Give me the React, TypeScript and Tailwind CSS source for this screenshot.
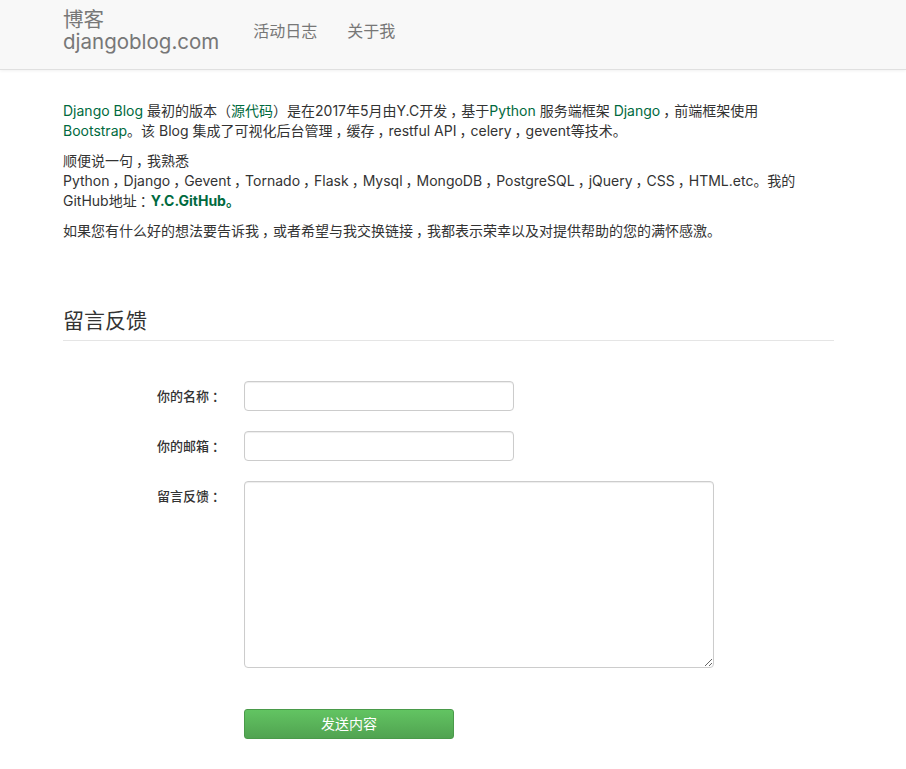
import React from 'react';

const font = { fontFamily: 'Inter, "Noto Sans CJK SC", sans-serif' };

const Green: React.FC<{ children: React.ReactNode; bold?: boolean }> = ({ children, bold }) => (
  <a href="#" className={`text-[#006a3e] ${bold ? 'font-bold' : ''}`}>{children}</a>
);

// full-width punctuation nudged to the middle of its box, as in the original rendering
const P: React.FC<{ c: string }> = ({ c }) => (
  <span className="ml-[3px] tracking-[-3px]">{c}</span>
);

const App: React.FC = () => {
  return (
    <div className="min-h-screen bg-white text-[#333] text-[14px] leading-[20px]" style={font}>
      <nav className="h-[70px] bg-[#f8f8f8] border-b border-[#e0e0e0] shadow-[0_1px_3px_rgba(0,0,0,0.06)] flex items-start pl-[63px]">
        <a href="#" className="block pt-[9px] text-[#777] text-[20.5px] leading-[22px]">
          <div>博客</div>
          <div>djangoblog.com</div>
        </a>
        <ul className="flex ml-[34px] pt-[21px] text-[#777] text-[16px] leading-[20px]">
          <li><a href="#">活动日志</a></li>
          <li className="ml-[30px]"><a href="#">关于我</a></li>
        </ul>
      </nav>

      <main className="px-[63px] pr-[72px]">
        <div className="pt-[31px]">
          <p className="mb-[10px]">
            <Green>Django Blog</Green> 最初的版本（<Green>源代码</Green>）是在2017年5月由Y.C开发<P c="，" />基于<Green>Python</Green> 服务端框架 <Green>Django</Green><P c="，" />前端框架使用<Green>Bootstrap</Green>。该 Blog 集成了可视化后台管理<P c="，" />缓存<P c="，" />restful API<P c="，" />celery<P c="，" />gevent等技术。
          </p>
          <p className="mb-[10px]">
            <span>顺便说一句<P c="，" />我熟悉</span>
            <br />
            Python<P c="，" />Django<P c="，" />Gevent<P c="，" />Tornado<P c="，" />Flask<P c="，" />Mysql<P c="，" />MongoDB<P c="，" />PostgreSQL<P c="，" />jQuery<P c="，" />CSS<P c="，" />HTML.etc。我的GitHub地址<P c="：" /><Green bold>Y.C.GitHub。</Green>
          </p>
          <p className="mb-[10px]">如果您有什么好的想法要告诉我<P c="，" />或者希望与我交换链接<P c="，" />我都表示荣幸以及对提供帮助的您的满怀感激。</p>
        </div>

        <h2 className="mt-[67px] text-[21px] leading-[26px] text-[#333] pb-[6px] border-b border-[#e5e5e5]">留言反馈</h2>

        <form className="mt-[40px] flex flex-col" onSubmit={e => e.preventDefault()}>
          <div className="flex items-center">
            <label className="w-[181px] text-right pr-[22px] text-[13px] font-medium text-[#333]">你的名称<P c="：" /></label>
            <input className="w-[270px] h-[30px] border border-[#ccc] rounded-[4px] px-2 shadow-[inset_0_1px_1px_rgba(0,0,0,0.075)]" />
          </div>
          <div className="flex items-center mt-[20px]">
            <label className="w-[181px] text-right pr-[22px] text-[13px] font-medium text-[#333]">你的邮箱<P c="：" /></label>
            <input className="w-[270px] h-[30px] border border-[#ccc] rounded-[4px] px-2 shadow-[inset_0_1px_1px_rgba(0,0,0,0.075)]" />
          </div>
          <div className="flex items-start mt-[20px]">
            <label className="w-[181px] text-right pr-[22px] text-[13px] font-medium text-[#333] pt-[5px]">留言反馈<P c="：" /></label>
            <textarea className="w-[470px] h-[187px] border border-[#ccc] rounded-[4px] px-2 shadow-[inset_0_1px_1px_rgba(0,0,0,0.075)]" />
          </div>
          <div className="flex mt-[41px] pl-[181px]">
            <button className="w-[210px] h-[30px] rounded-[3px] border border-[#4a9a4a] bg-gradient-to-b from-[#62c462] to-[#51a351] text-white text-[14px]">发送内容</button>
          </div>
        </form>
      </main>
    </div>
  );
};

export default App;
